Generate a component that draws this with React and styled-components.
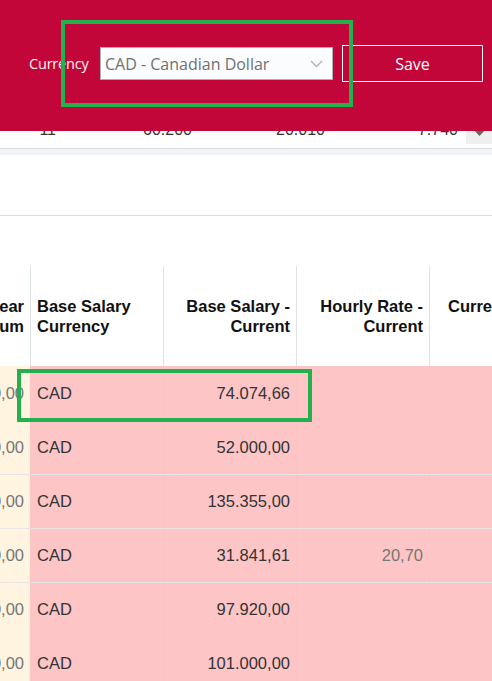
import styled, { createGlobalStyle } from 'styled-components';

const GlobalStyle = createGlobalStyle`
  body {
    margin: 0;
    overflow: hidden;
    background: #fff;
  }
`;

const Page = styled.div`
  position: relative;
  width: 492px;
  height: 681px;
  overflow: hidden;
  font-family: "Liberation Sans", Arial, sans-serif;
`;

const TopBar = styled.div`
  height: 131px;
  box-sizing: border-box;
  background: #c20639;
  padding: 45px 0 0 29px;
`;

const Controls = styled.div`
  display: flex;
  align-items: center;
  height: 37px;
  font-family: "Open Sans", "Noto Sans", sans-serif;
`;

const Label = styled.span`
  width: 71px;
  color: #fff4f6;
  font-size: 14.5px;
  font-weight: 400;
  letter-spacing: -0.2px;
`;

const Select = styled.div`
  width: 233px;
  height: 33px;
  box-sizing: border-box;
  display: flex;
  align-items: center;
  justify-content: space-between;
  padding: 0 9px 0 4px;
  background: #fbfcfe;
  border: 1px solid #a9b1b8;
  color: #707070;
  font-size: 16px;
  margin-right: 9px;
`;

const SaveButton = styled.button`
  width: 141px;
  height: 37px;
  background: transparent;
  border: 1px solid #fff;
  color: #fff;
  font-family: inherit;
  font-size: 16px;
  padding: 0;
`;

const PeekRow = styled.div`
  height: 18px;
  box-sizing: border-box;
  overflow: hidden;
  border-bottom: 1px solid #d5dde3;
  display: grid;
  grid-template-columns: 62px 136px 133px 133px 1fr;
`;

const PeekCell = styled.div`
  text-align: right;
  padding-right: 6px;
  margin-top: -10px;
  font-size: 16px;
  line-height: 18px;
  color: #333;
`;

const ScrollKnob = styled.div`
  justify-self: end;
  width: 26px;
  height: 13px;
  background: #efefef;
  display: flex;
  justify-content: center;
  overflow: hidden;
  svg {
    margin-top: -4px;
  }
`;

const Strip = styled.div`
  height: 6px;
  background: #f2f3f4;
`;

const Panel = styled.div`
  height: 61px;
  box-sizing: border-box;
  border-bottom: 1px solid #d9dee3;
`;

const Table = styled.div`
  padding-top: 50px;
  display: grid;
  grid-template-columns: 30px 133px 133px 133px 133px;
`;

const HeadCell = styled.div`
  height: 100px;
  box-sizing: border-box;
  display: flex;
  flex-direction: column;
  justify-content: center;
  align-items: ${p => (p.$align === 'left' ? 'flex-start' : 'flex-end')};
  padding: 0 6px 0 ${p => p.$indent || 6}px;
  border-left: ${p => (p.$first ? 'none' : '1px solid #dde3e8')};
  font-size: 16.5px;
  font-weight: bold;
  line-height: 20px;
  color: #111;
  white-space: nowrap;
  span { display: block; }
`;

const Row = styled.div`
  display: contents;
`;

const Cell = styled.div`
  height: 54px;
  box-sizing: border-box;
  display: flex;
  align-items: center;
  justify-content: ${p => (p.$align === 'left' ? 'flex-start' : 'flex-end')};
  padding: 0 6px;
  background: ${p => (p.$cream ? '#fff4df' : '#fdc5c6')};
  border-left: ${p => (p.$cream ? 'none' : '1px solid #fcc3c4')};
  border-top: ${p => (p.$divider ? '1px solid #eae4e4' : 'none')};
  font-size: 16.5px;
  color: ${p => (p.$muted ? '#777' : '#333')};
  white-space: nowrap;
`;

const Annotation = styled.div`
  position: absolute;
  box-sizing: border-box;
  border: 4px solid #22b14c;
  pointer-events: none;
`;

const rows = [
  { left: '60.000,00', base: '74.074,66', hourly: '', divider: false },
  { left: '60.000,00', base: '52.000,00', hourly: '', divider: false },
  { left: '60.000,00', base: '135.355,00', hourly: '', divider: true },
  { left: '60.000,00', base: '31.841,61', hourly: '20,70', divider: true },
  { left: '60.000,00', base: '97.920,00', hourly: '', divider: true },
  { left: '60.000,00', base: '101.000,00', hourly: '', divider: false },
];

const Chevron = () => (
  <svg width="13" height="8" viewBox="0 0 13 8">
    <path d="M1 1 L6.5 6.5 L12 1" fill="none" stroke="#b3b3b3" strokeWidth="1.3" />
  </svg>
);

const App = () => (
  <Page>
    <GlobalStyle />
    <TopBar>
      <Controls>
        <Label>Currency</Label>
        <Select>
          <span>CAD - Canadian Dollar</span>
          <Chevron />
        </Select>
        <SaveButton>Save</SaveButton>
      </Controls>
    </TopBar>

    <PeekRow>
      <PeekCell>11</PeekCell>
      <PeekCell>60.200</PeekCell>
      <PeekCell>20.010</PeekCell>
      <PeekCell>7.740</PeekCell>
      <ScrollKnob>
        <svg width="13" height="10" viewBox="0 0 13 10">
          <path d="M0 2 L2.5 0 L6.5 4 L10.5 0 L13 2 L6.5 9 Z" fill="#666" />
        </svg>
      </ScrollKnob>
    </PeekRow>
    <Strip />
    <Panel />

    <Table>
      <HeadCell $first>
        <span>Salary Range - Year</span>
        <span>Minimum</span>
      </HeadCell>
      <HeadCell $align="left">
        <span>Base Salary</span>
        <span>Currency</span>
      </HeadCell>
      <HeadCell>
        <span>Base Salary -</span>
        <span>Current</span>
      </HeadCell>
      <HeadCell>
        <span>Hourly Rate -</span>
        <span>Current</span>
      </HeadCell>
      <HeadCell $align="left" $indent={18}>
        <span>Current Year</span>
        <span>&nbsp;</span>
      </HeadCell>

      {rows.map((r, i) => (
        <Row key={i}>
          <Cell $cream $muted $divider={r.divider}>{r.left}</Cell>
          <Cell $align="left" $divider={r.divider}>CAD</Cell>
          <Cell $divider={r.divider}>{r.base}</Cell>
          <Cell $muted $divider={r.divider}>{r.hourly}</Cell>
          <Cell $divider={r.divider} />
        </Row>
      ))}
    </Table>

    <Annotation style={{ left: 61, top: 20, width: 292, height: 87 }} />
    <Annotation style={{ left: 17, top: 369, width: 295, height: 53 }} />
  </Page>
);

export default App;
